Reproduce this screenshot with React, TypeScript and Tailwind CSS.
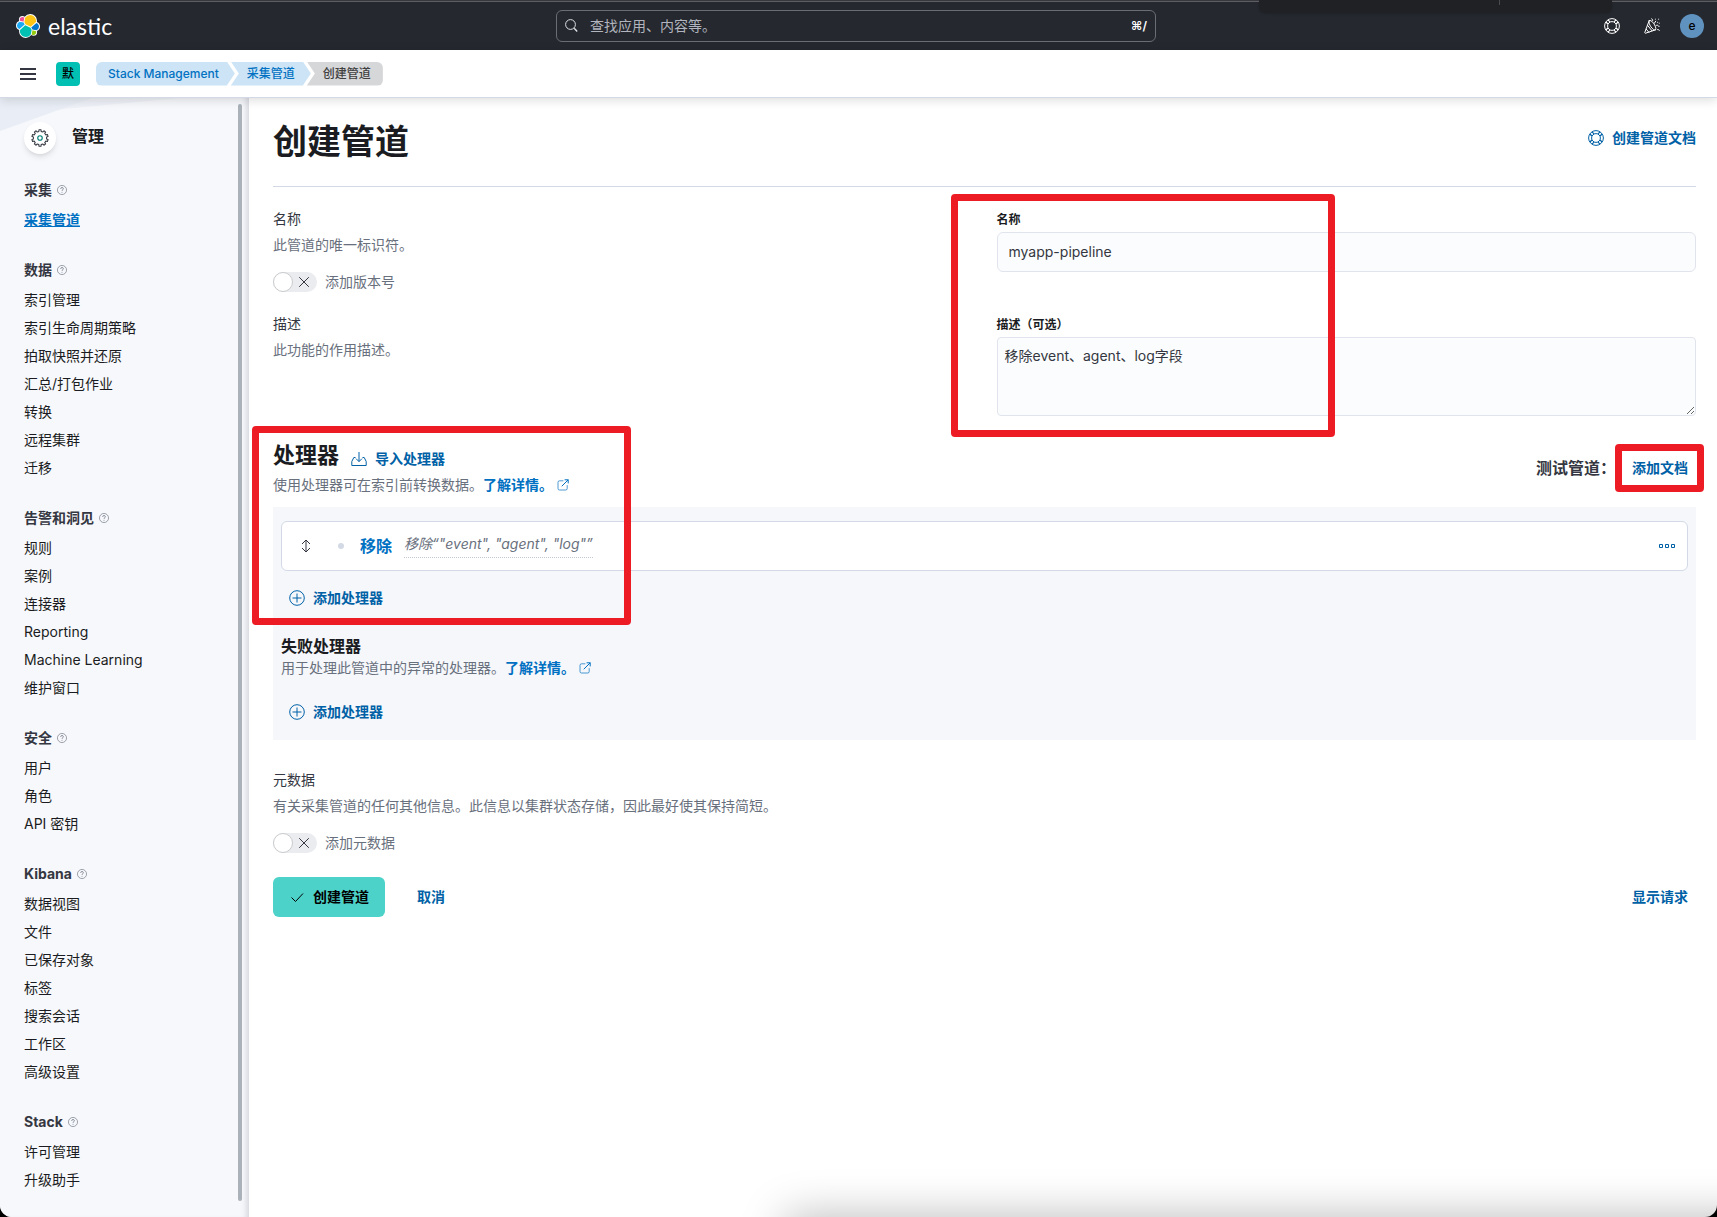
import type { ReactNode } from "react";

type NavSection = {
  title: string;
  items: string[];
};

const NAV: NavSection[] = [
  { title: "采集", items: ["采集管道"] },
  {
    title: "数据",
    items: ["索引管理", "索引生命周期策略", "拍取快照并还原", "汇总/打包作业", "转换", "远程集群", "迁移"],
  },
  {
    title: "告警和洞见",
    items: ["规则", "案例", "连接器", "Reporting", "Machine Learning", "维护窗口"],
  },
  { title: "安全", items: ["用户", "角色", "API 密钥"] },
  {
    title: "Kibana",
    items: ["数据视图", "文件", "已保存对象", "标签", "搜索会话", "工作区", "高级设置"],
  },
  { title: "Stack", items: ["许可管理", "升级助手"] },
];

const ACTIVE_ITEM = "采集管道";

// Cog outline with evenly spaced square teeth around an 8,8 center.
function gearPath(teeth: number, inner: number, outer: number): string {
  const step = (Math.PI * 2) / teeth;
  const points: string[] = [];
  for (let i = 0; i < teeth; i++) {
    const a = i * step - Math.PI / 2;
    const corners: [number, number][] = [
      [a - step * 0.27, inner],
      [a - step * 0.21, outer],
      [a + step * 0.21, outer],
      [a + step * 0.27, inner],
    ];
    for (const [angle, r] of corners) {
      points.push(`${(8 + Math.cos(angle) * r).toFixed(2)} ${(8 + Math.sin(angle) * r).toFixed(2)}`);
    }
  }
  return `M${points.join("L")}Z`;
}

function ElasticLogo() {
  return (
    <svg width="24" height="24" viewBox="0 0 32 32" aria-hidden>
      <path
        fill="#fff"
        d="M32 16.77a6.334 6.334 0 0 0-4.18-5.969 9.05 9.05 0 0 0 .165-1.718A9.053 9.053 0 0 0 19 0a9.03 9.03 0 0 0-7.353 3.752 4.76 4.76 0 0 0-2.95-1.006A4.8 4.8 0 0 0 3.9 7.54c0 .58.108 1.14.302 1.66A6.39 6.39 0 0 0 0 15.2a6.33 6.33 0 0 0 4.202 5.978 9.3 9.3 0 0 0-.164 1.718A9.036 9.036 0 0 0 13.049 31.9a9.03 9.03 0 0 0 7.336-3.77 4.75 4.75 0 0 0 2.95 1.007 4.8 4.8 0 0 0 4.796-4.794c0-.58-.108-1.14-.302-1.66A6.39 6.39 0 0 0 32 16.77"
      />
      <path fill="#FEC514" d="M12.58 13.787l7.002 3.211 7.066-6.213a7.85 7.85 0 0 0 .152-1.557 7.944 7.944 0 0 0-7.93-7.93 7.93 7.93 0 0 0-6.545 3.454l-1.177 6.079z" />
      <path fill="#00BFB3" d="M5.333 21.23A8 8 0 0 0 5.18 22.8c0 4.38 3.56 7.94 7.96 7.94a7.97 7.97 0 0 0 6.58-3.48l1.166-6.075-1.556-2.98-7.026-3.21z" />
      <path fill="#F04E98" d="M5.288 9.066l4.8 1.138 1.05-5.454a3.79 3.79 0 0 0-2.3-.77A3.82 3.82 0 0 0 5.03 7.78c0 .44.08.88.258 1.286" />
      <path fill="#1BA9F5" d="M4.872 10.21A5.325 5.325 0 0 0 1.328 15.2c0 2.2 1.372 4.17 3.42 4.95l6.734-6.09-1.236-2.645z" />
      <path fill="#93C90E" d="M20.873 27.177a3.8 3.8 0 0 0 2.287.772 3.82 3.82 0 0 0 3.555-5.08l-4.793-1.12z" />
      <path fill="#07C" d="M21.848 20.563l5.28 1.236A5.33 5.33 0 0 0 30.68 16.8c0-2.2-1.37-4.17-3.424-4.95l-6.905 6.054z" />
    </svg>
  );
}

function LifebuoyIcon() {
  return (
    <svg width="16" height="16" viewBox="0 0 16 16" fill="none" stroke="currentColor" aria-hidden>
      <circle cx="8" cy="8" r="7.400" />
      <circle cx="8" cy="8" r="4.400" />
      <path
        d="M6 3.900L4 1.900M3.900 6L1.900 4M10 3.900l2-2M12.100 6l2-2M10 12.100l2 2M12.100 10l2 2M6 12.100l-2 2M3.900 10l-2 2"
        strokeWidth="1.200"
      />
    </svg>
  );
}

function CheerIcon() {
  return (
    <svg width="16" height="16" viewBox="0 0 16 16" fill="none" stroke="currentColor" strokeLinejoin="round" strokeLinecap="round" aria-hidden>
      <path d="M5.2 2.6L.8 14.4a.6.6 0 0 0 .8.8l10-3.4" />
      <path d="M5.2 2.6c.9-.8 2.6.4 4.3 2.6s2.9 5.2 2.1 6.6c-1.2.7-3.2-.9-4.7-3S4.4 3.6 5.2 2.6z" />
      <path d="M3.7 7.5l4.3 5.3M2.3 11.2l2.5 3" />
      <path d="M7.7.8c.9.3 1.2 1 .9 2M10.3 5.3l1.4-2.100M12 7.600c1-.8 2-.5 2.300.3.2.8 1 .8 1.2.4M13.600 11.500c.8-.3 1.600.2 1.700 1" />
      <path d="M11.300 1.200h.1M14.600 1.200h.1M13.600 4.300h.1M15.200 5.200h.1" />
    </svg>
  );
}

function HelpIcon() {
  return (
    <svg width="10" height="10" viewBox="0 0 16 16" fill="none" stroke="#69707d" aria-hidden>
      <circle cx="8" cy="8" r="7.300" />
      <path d="M5.800 6.200C5.800 4.800 6.700 4 8 4s2.200.8 2.200 1.900c0 1.600-2.200 1.700-2.200 3.500M8 11v1.300" strokeWidth="1.200" />
    </svg>
  );
}

function ExternalIcon() {
  return (
    <svg width="12" height="12" viewBox="0 0 12 12" fill="none" stroke="currentColor" strokeLinecap="round" aria-hidden>
      <path d="M6 1.800H2.500A1.500 1.500 0 0 0 1 3.300v6.200A1.500 1.500 0 0 0 2.500 11h6.200a1.500 1.500 0 0 0 1.500-1.500V6.500" opacity=".7" />
      <path d="M5 7l6-6M8 .8h3.200V4" />
    </svg>
  );
}

function PlusCircleIcon() {
  return (
    <svg width="16" height="16" viewBox="0 0 16 16" fill="none" stroke="currentColor" aria-hidden>
      <circle cx="8" cy="8" r="7.300" />
      <path d="M3.500 8h9M8 3.500v9" />
    </svg>
  );
}

function DocLink() {
  return (
    <a href="#" className="inline-flex items-center gap-1 font-semibold text-[#0071c2]">
      了解详情。
      <ExternalIcon />
    </a>
  );
}

function AddProcessorButton() {
  return (
    <button type="button" className="flex h-10 items-center gap-2 px-2 font-semibold text-[#0061a6]">
      <PlusCircleIcon />
      添加处理器
    </button>
  );
}

function Toggle({ label }: { label: string }) {
  return (
    <label className="mt-[15px] flex h-5 w-fit items-center gap-2 text-[#69707d]">
      <span className="relative block h-5 w-11">
        <input type="checkbox" role="switch" className="block h-5 w-11 appearance-none rounded-full bg-[#ebecf0]" />
        <span className="absolute left-0 top-0 h-5 w-5 rounded-full border border-[#c9cbcd] bg-white" />
        <svg className="absolute right-[7px] top-1 text-[#343741]" width="12" height="12" viewBox="0 0 12 12" fill="none" stroke="currentColor" aria-hidden>
          <path d="M1.200 1.200l9.600 9.600M10.800 1.200l-9.600 9.600" />
        </svg>
      </span>
      {label}
    </label>
  );
}

function FormText({ title, children }: { title: string; children: ReactNode }) {
  return (
    <div className="flex flex-col gap-0.5 leading-6">
      <h3 className="text-[#343741]">{title}</h3>
      <p className="text-[#69707d]">{children}</p>
    </div>
  );
}

function TopBar() {
  return (
    <header className="relative flex h-[50px] items-center justify-between border-t border-[#36383d] bg-[#25282f] pl-4 pr-[13px] text-white shadow-[inset_0_1px_0_#5c5e64]">
      <a href="#" className="flex items-center gap-2">
        <ElasticLogo />
        <span className="font-[Lato] text-[23px] leading-6">elastic</span>
      </a>
      <div className="flex h-8 w-[600px] items-center gap-3 rounded-md border border-[#6a6d73] px-2">
        <svg width="13" height="13" viewBox="0 0 13 13" fill="none" stroke="#dfe1e5" aria-hidden>
          <circle cx="5.500" cy="5.500" r="4.900" />
          <path d="M9.200 9.200l3 3.200" strokeWidth="1.400" />
        </svg>
        <input
          aria-label="搜索"
          placeholder="查找应用、内容等。"
          className="min-w-0 flex-1 bg-transparent text-sm outline-none placeholder:text-[#b2b5bd]"
        />
        <kbd className="font-[Inter] text-xs font-semibold text-white">⌘/</kbd>
      </div>
      <div className="flex items-center gap-4">
        <button type="button" aria-label="帮助" className="p-1">
          <LifebuoyIcon />
        </button>
        <button type="button" aria-label="新闻" className="p-1">
          <CheerIcon />
        </button>
        <button type="button" className="h-6 w-6 rounded-full bg-[#6092c0] text-xs font-medium text-black">
          e
        </button>
      </div>
      {/* Floating window tab that hangs over the bar */}
      <div className="absolute -top-px right-[105px] flex h-[13px] w-[353px] justify-end rounded-b-md bg-[#202124] shadow">
        <span className="mr-[112px] h-[5px] w-px bg-[#4a4b4f]" />
      </div>
    </header>
  );
}

function BreadcrumbBar() {
  return (
    <div className="relative z-10 flex h-12 items-center border-b border-[#d3dae6] bg-white pl-5 shadow-[0_2px_10px_rgba(0,0,0,0.14)]">
      <button type="button" aria-label="菜单" className="text-[#343741]">
        <svg width="16" height="16" viewBox="0 0 16 16" stroke="currentColor" strokeWidth="2" aria-hidden>
          <path d="M0 3h16M0 8h16M0 13h16" />
        </svg>
      </button>
      <button type="button" className="ml-5 h-6 w-6 rounded bg-[#00bfb3] text-xs font-medium text-black">
        默
      </button>
      <nav className="ml-4 flex text-xs font-medium leading-6">
        <a
          href="#"
          className="rounded-l-md bg-[#cce4f5] px-4 pl-3 text-[#0071c2] [clip-path:polygon(0_0,calc(100%-8px)_0,100%_50%,calc(100%-8px)_100%,0_100%)]"
        >
          Stack Management
        </a>
        <a
          href="#"
          className="-ml-1 bg-[#cce4f5] px-4 text-[#0071c2] [clip-path:polygon(0_0,calc(100%-8px)_0,100%_50%,calc(100%-8px)_100%,0_100%,8px_50%)]"
        >
          采集管道
        </a>
        <span
          aria-current="page"
          className="-ml-1 rounded-r-md bg-[#d6d7d9] pl-4 pr-3 text-[#404040] [clip-path:polygon(0_0,100%_0,100%_100%,0_100%,8px_50%)]"
        >
          创建管道
        </span>
      </nav>
    </div>
  );
}

function Sidebar() {
  return (
    <aside className="relative w-[249px] shrink-0 bg-[#f7f8fc] px-6 pb-4 pt-6 shadow-[inset_-7px_0_6px_-5px_rgba(105,112,125,0.28)]">
      <svg className="absolute left-0 top-0" width="180" height="34" viewBox="0 0 180 34" aria-hidden>
        <path d="M0 0h180L0 17z" fill="#eef1f7" />
        <path d="M0 0h92L0 33z" fill="#e9edf5" />
      </svg>
      <div className="relative mb-6 flex gap-4">
        <span className="flex h-8 w-8 items-center justify-center rounded-full bg-white shadow-md">
          <svg width="18" height="18" viewBox="0 0 16 16" fill="none" aria-hidden>
            <path d={gearPath(10, 5.9, 7.3)} stroke="#343741" strokeWidth=".9" strokeLinejoin="round" />
            <circle cx="8" cy="8" r="2" stroke="#017d73" />
          </svg>
        </span>
        <h2 className="text-base font-bold leading-7 text-[#1a1c21]">管理</h2>
      </div>
      <nav className="flex flex-col gap-6">
        {NAV.map((section) => (
          <div key={section.title}>
            <h3 className="mb-1 flex items-center gap-[5px] font-bold leading-6 text-[#343741]">
              {section.title}
              <HelpIcon />
            </h3>
            <ul>
              {section.items.map((item) => (
                <li key={item} className="leading-7">
                  <a
                    href="#"
                    className={item === ACTIVE_ITEM ? "font-bold text-[#0071c2] underline" : "text-[#1a1c21]"}
                  >
                    {item}
                  </a>
                </li>
              ))}
            </ul>
          </div>
        ))}
      </nav>
      <span className="absolute bottom-4 right-[7px] top-1.5 w-1 rounded-full bg-[#aab1b9]" />
    </aside>
  );
}

function Processors() {
  return (
    <section className="relative mt-[23px]">
      <div className="flex items-center justify-between">
        <div>
          <div className="flex items-end gap-3">
            <h2 className="text-[22px] font-bold leading-8 text-[#1a1c21]">处理器</h2>
            <button type="button" className="flex h-6 items-center gap-2 font-semibold text-[#0061a6]">
              <svg width="16" height="16" viewBox="0 0 16 16" fill="none" stroke="currentColor" strokeLinejoin="round" aria-hidden>
                <path d="M4.500 6.500H2.800L.8 10.500v4h14.400v-4l-2-4h-1.700" />
                <path d="M8 1v9.500M5 7.600l3 3 3-3" />
              </svg>
              导入处理器
            </button>
          </div>
          <p className="mt-0.5 leading-6 text-[#69707d]">
            使用处理器可在索引前转换数据。
            <DocLink />
          </p>
        </div>
        <div className="relative flex items-center gap-4 px-2">
          <h3 className="text-base font-semibold leading-6 text-[#343741]">测试管道：</h3>
          <button type="button" className="font-semibold leading-6 text-[#0061a6]">
            添加文档
          </button>
          <span className="pointer-events-none absolute -bottom-3 -right-2 -top-3 w-[89px] rounded border-[7px] border-[#ed1c24]" />
        </div>
      </div>

      <div className="mt-2.5 bg-[#f5f7fb] px-2 pb-2 pt-3.5">
        <div className="flex h-[50px] items-center rounded-md border border-[#d3dae6] bg-white pl-4 pr-3">
          <svg width="16" height="16" viewBox="0 0 16 16" fill="none" stroke="#343741" aria-label="移动">
            <path d="M8 2v12M4 6l4-4 4 4M4 10l4 4 4-4" />
          </svg>
          <span className="ml-6 h-1.5 w-1.5 rounded-full bg-[#d3dae6]" />
          <a href="#" className="ml-4 text-base font-bold text-[#0071c2]">
            移除
          </a>
          <span className="ml-3 border-b border-dotted border-[#c0c6d2] pb-[3px] italic leading-5 text-[#69707d]">
            移除“"event", "agent", "log"”
          </span>
          <button type="button" aria-label="更多操作" className="ml-auto text-[#0061a6]">
            <svg width="16" height="4" viewBox="0 0 16 4" fill="none" stroke="currentColor" aria-hidden>
              <path d="M.5.5h3v3h-3zM6.500.5h3v3h-3zM12.500.5h3v3h-3z" />
            </svg>
          </button>
        </div>
        <div className="mt-[7px]">
          <AddProcessorButton />
        </div>
        <h3 className="mt-4 text-base font-bold leading-6 text-[#1a1c21]">失败处理器</h3>
        <p className="mb-3.5 leading-5 text-[#69707d]">
          用于处理此管道中的异常的处理器。
          <DocLink />
        </p>
        <AddProcessorButton />
      </div>
      <span className="pointer-events-none absolute -left-[21px] -top-[13px] h-[199px] w-[379px] rounded border-[7px] border-[#ed1c24]" />
    </section>
  );
}

export default function App() {
  return (
    <div className="min-h-screen bg-black">
      <div className="relative flex min-h-screen flex-col overflow-hidden rounded-b-xl bg-white font-[Inter,'Noto_Sans_CJK_SC',sans-serif] text-sm">
        <TopBar />
        <BreadcrumbBar />
        <div className="flex flex-1">
          <Sidebar />
          <main className="min-w-0 flex-1 pb-6 pl-6 pr-[21px] pt-6">
            <div className="flex items-start justify-between border-b border-[#d3dae6] pb-6">
              <h1 className="text-[34px] font-bold leading-10 text-[#1a1c21]">创建管道</h1>
              <a href="#" className="flex h-8 items-center gap-2 font-semibold text-[#0061a6]">
                <LifebuoyIcon />
                创建管道文档
              </a>
            </div>

            <form onSubmit={(e) => e.preventDefault()}>
              <div className="grid grid-cols-2 gap-x-6 gap-y-5 pt-5">
                <div>
                  <FormText title="名称">此管道的唯一标识符。</FormText>
                  <Toggle label="添加版本号" />
                </div>
                <div className="relative">
                  <label htmlFor="name" className="block pt-px text-xs font-bold leading-6 text-[#1a1c21]">
                    名称
                  </label>
                  <input
                    id="name"
                    defaultValue="myapp-pipeline"
                    className="block h-10 w-full rounded-md border border-[#e1e4ed] bg-[#fbfcfd] px-[11px] pb-0.5 text-[#343741]"
                  />
                  <span className="pointer-events-none absolute -left-[46px] -top-[13px] z-10 h-[243px] w-[384px] rounded border-[7px] border-[#ed1c24]" />
                </div>
                <FormText title="描述">此功能的作用描述。</FormText>
                <div>
                  <label htmlFor="description" className="block pt-px text-xs font-bold leading-6 text-[#1a1c21]">
                    描述（可选）
                  </label>
                  <textarea
                    id="description"
                    defaultValue="移除event、agent、log字段"
                    className="block h-[79px] w-full rounded border border-[#e1e4ed] bg-[#fbfcfd] px-[7px] py-2 leading-5 text-[#343741]"
                  />
                </div>
              </div>

              <Processors />

              <section className="mt-7">
                <FormText title="元数据">
                  有关采集管道的任何其他信息。此信息以集群状态存储，因此最好使其保持简短。
                </FormText>
                <Toggle label="添加元数据" />
              </section>

              <div className="mt-6 flex h-10 items-center justify-between">
                <div className="flex h-10 items-center gap-8">
                  <button
                    type="submit"
                    className="flex h-10 items-center gap-2 rounded-md bg-[#4dd2ca] px-4 font-semibold text-black"
                  >
                    <svg width="16" height="16" viewBox="0 0 16 16" fill="none" stroke="currentColor" aria-hidden>
                      <path d="M2.500 8.500l4 4 7.500-8" />
                    </svg>
                    创建管道
                  </button>
                  <button type="button" className="font-semibold text-[#0061a6]">
                    取消
                  </button>
                </div>
                <button type="button" className="px-2 font-semibold text-[#0061a6]">
                  显示请求
                </button>
              </div>
            </form>
          </main>
        </div>
        {/* Soft shadow rising from the window underneath */}
        <div className="pointer-events-none absolute bottom-0 left-[43%] right-0 h-20 overflow-hidden">
          <div className="absolute -right-20 left-12 top-full h-20 shadow-[0_0_46px_rgba(0,0,0,0.28)]" />
        </div>
      </div>
    </div>
  );
}
